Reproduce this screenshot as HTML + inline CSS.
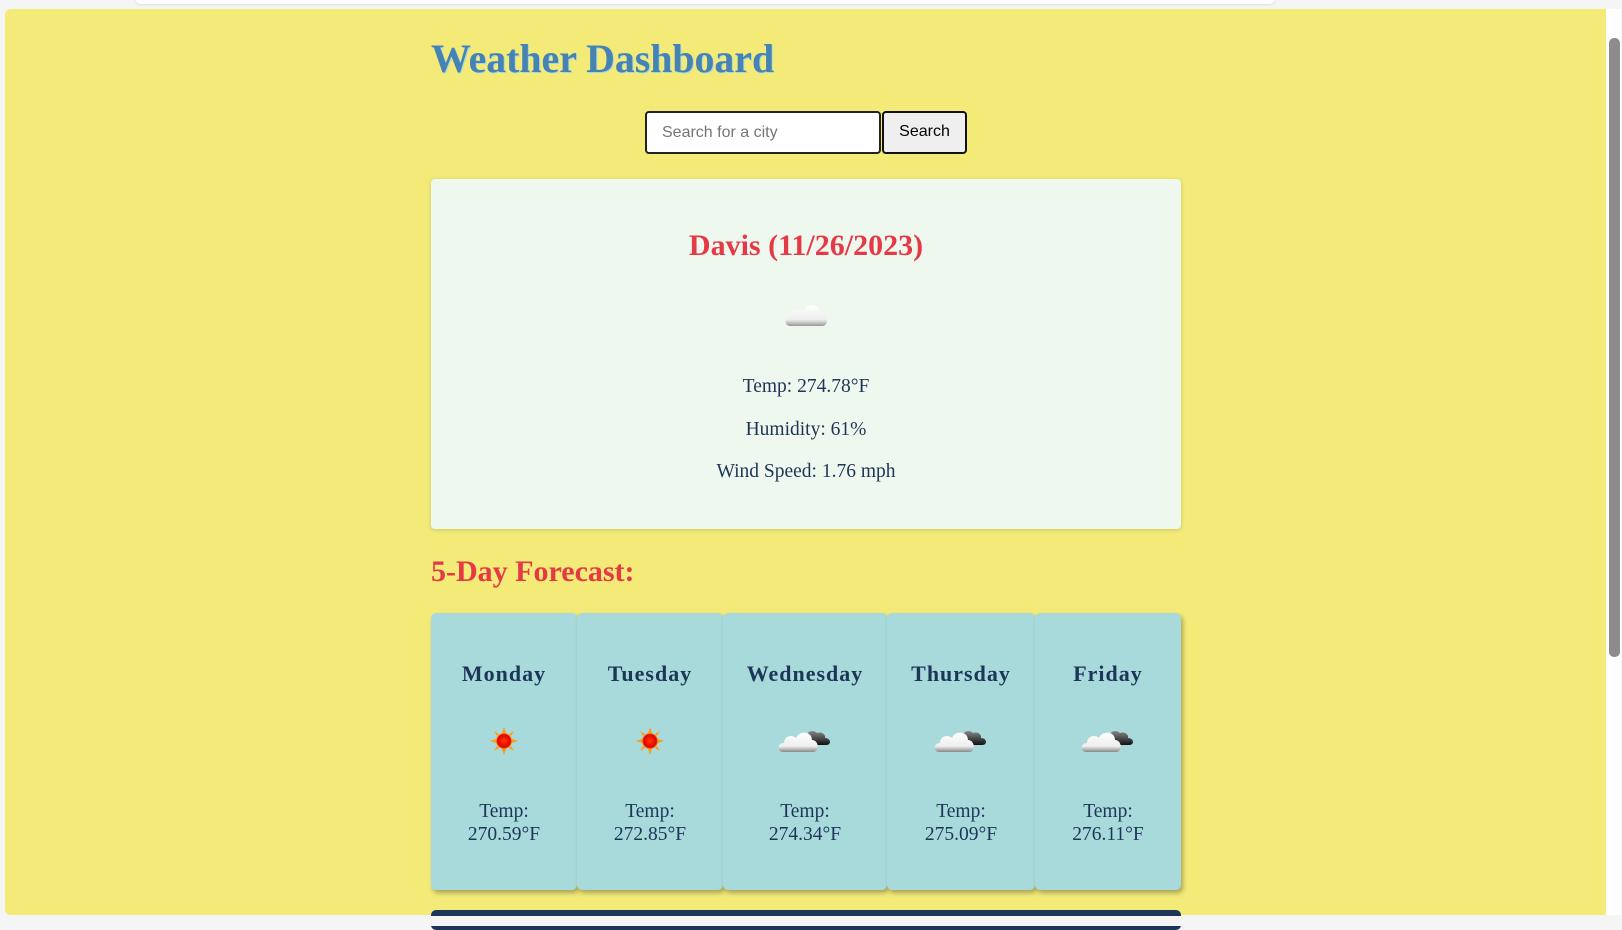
<!DOCTYPE html>
<html><head><meta charset="utf-8"><style>
*{margin:0;padding:0;box-sizing:border-box}
body{width:1622px;height:921px;background:#f5f5f5;position:relative;overflow:hidden;font-family:"Liberation Serif",serif}
.topbar{position:absolute;left:135px;top:-8px;width:1140px;height:12px;background:#fff;border-radius:8px;box-shadow:0 1px 2px #ddd}
.page{position:absolute;left:5px;top:9px;width:1601px;height:906px;background:#f3ea78;border-radius:6px 0 0 6px}
.sb{position:absolute;left:1606px;top:9px;width:15px;height:906px;background:#fff}
.thumb{position:absolute;left:1609px;top:38px;width:11px;height:619px;background:#8c8c8c;border-radius:5px}
.abs{position:absolute}
h1{position:absolute;left:431px;top:36px;font-size:39.8px;font-weight:bold;color:#4682b4;text-shadow:1px 1px 0 #a8dadc}
.inp{position:absolute;left:645px;top:111px;width:236px;height:43px;background:#fff;border:2px solid #222;border-radius:4px;font-family:"Liberation Sans",sans-serif;font-size:16px;color:#757575;padding:11px 15px}
.btn{position:absolute;left:882px;top:111px;width:85px;height:43px;background:#efefef;border:2px solid #111;border-radius:4px;font-family:"Liberation Sans",sans-serif;font-size:16px;color:#000;text-align:center;line-height:37px}
.main{position:absolute;left:431px;top:179px;width:750px;height:350px;background:#eff8ee;border-radius:4px;box-shadow:0 1px 4px rgba(0,0,0,.15)}
.c{position:absolute;left:0;width:100%;text-align:center;color:#1d3557;font-size:19.5px}
.red{color:#e63946;font-weight:bold}
.card{position:absolute;top:613px;height:277px;background:#a8dadc;border-radius:5px;box-shadow:2px 3px 5px rgba(0,0,0,.3)}
.card .d{position:absolute;top:48px;width:100%;text-align:center;font-size:22px;font-weight:bold;letter-spacing:1px;color:#1d3557}
.card .t{position:absolute;top:187px;width:100%;text-align:center;font-size:19.5px;line-height:23px;color:#1d3557}
.card svg{position:absolute;left:50%;top:112px;transform:translateX(-50%)}
.bar{position:absolute;left:431px;top:910px;width:750px;height:20px;background:#1d3557;border-radius:5px}
</style></head><body>
<div class="topbar"></div>
<div class="page"></div>
<div class="sb"></div><div class="thumb"></div>
<h1>Weather Dashboard</h1>
<div class="inp">Search for a city</div>
<div class="btn">Search</div>
<div class="main">
 <div class="c red" style="top:50px;font-size:30px">Davis (11/26/2023)</div>
 <svg class="abs" style="left:353px;top:121px" width="46" height="28" viewBox="0 0 46 28"><defs><linearGradient id="g0" x1="0" y1="0" x2="0" y2="1"><stop offset="0" stop-color="#fff"/><stop offset=".7" stop-color="#eee"/><stop offset="1" stop-color="#999"/></linearGradient></defs><path d="M6 26 C0 26 0 17 7 17 C7 10 15 8 19 12 C22 2 36 3 36 13 C44 12 46 26 38 26 Z" fill="url(#g0)"/></svg>
 <div class="c" style="top:197px">Temp: 274.78°F</div>
 <div class="c" style="top:240px">Humidity: 61%</div>
 <div class="c" style="top:282px">Wind Speed: 1.76 mph</div>
</div>
<div class="abs red" style="left:431px;top:555px;font-size:30px">5-Day Forecast:</div>

<svg width="0" height="0" style="position:absolute"><defs>
<linearGradient id="cg" x1="0" y1="0" x2="0" y2="1"><stop offset="0" stop-color="#fff"/><stop offset=".7" stop-color="#eee"/><stop offset="1" stop-color="#888"/></linearGradient>
<linearGradient id="dg" x1="0" y1="0" x2="0" y2="1"><stop offset="0" stop-color="#888"/><stop offset="1" stop-color="#111"/></linearGradient>
<radialGradient id="sg"><stop offset="0" stop-color="#ff3a00"/><stop offset=".8" stop-color="#e00000"/><stop offset="1" stop-color="#ffa000"/></radialGradient>
<symbol id="sun" viewBox="0 0 28 28"><g fill="#ff9a1a"><polygon points="14,0 16,6 12,6"/><polygon points="14,28 16,22 12,22"/><polygon points="0,14 6,12 6,16"/><polygon points="28,14 22,12 22,16"/><polygon points="4,4 9,7 7,9"/><polygon points="24,4 21,9 19,7"/><polygon points="4,24 7,19 9,21"/><polygon points="24,24 19,21 21,19"/></g><circle cx="14" cy="14" r="8" fill="url(#sg)"/></symbol>
<symbol id="cl" viewBox="0 0 54 28"><path d="M28 16 C26 8 34 3 39 8 C44 6 48 10 47 13 C53 13 54 20 48 20 L32 20 Z" fill="url(#dg)"/><path d="M5 27 C-1 27 -1 18 6 18 C6 11 14 9 18 13 C21 5 34 6 34 15 C41 15 42 27 35 27 Z" fill="url(#cg)"/></symbol>
</defs></svg>

<div class="card" style="left:431px;width:146px"><div class="d">Monday</div><svg width="28" height="28" style="top:114px"><use href="#sun"/></svg><div class="t">Temp:<br>270.59°F</div></div>
<div class="card" style="left:577px;width:146px"><div class="d">Tuesday</div><svg width="28" height="28" style="top:114px"><use href="#sun"/></svg><div class="t">Temp:<br>272.85°F</div></div>
<div class="card" style="left:723px;width:164px"><div class="d">Wednesday</div><svg width="54" height="28"><use href="#cl"/></svg><div class="t">Temp:<br>274.34°F</div></div>
<div class="card" style="left:887px;width:148px"><div class="d">Thursday</div><svg width="54" height="28"><use href="#cl"/></svg><div class="t">Temp:<br>275.09°F</div></div>
<div class="card" style="left:1035px;width:146px"><div class="d">Friday</div><svg width="54" height="28"><use href="#cl"/></svg><div class="t">Temp:<br>276.11°F</div></div>
<div class="bar"></div>
<div class="abs" style="left:0;top:916px;width:1622px;height:10px;background:#f5f5f5"></div>
</body></html>
